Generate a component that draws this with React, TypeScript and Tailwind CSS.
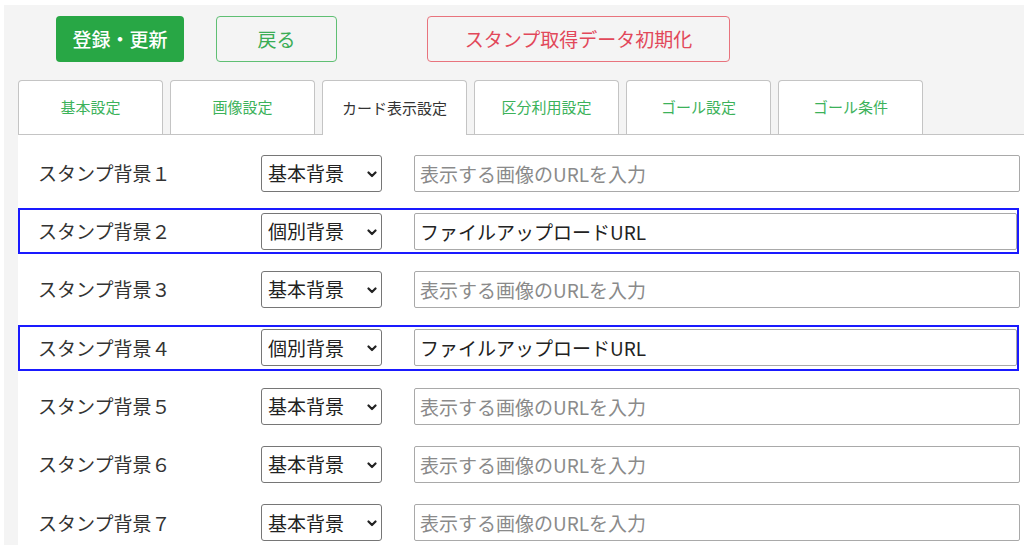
import React, { useState } from 'react';

const tabs = ['基本設定', '画像設定', 'カード表示設定', '区分利用設定', 'ゴール設定', 'ゴール条件'];

const rows = [
  { label: 'スタンプ背景１', mode: 'base' },
  { label: 'スタンプ背景２', mode: 'own' },
  { label: 'スタンプ背景３', mode: 'base' },
  { label: 'スタンプ背景４', mode: 'own' },
  { label: 'スタンプ背景５', mode: 'base' },
  { label: 'スタンプ背景６', mode: 'base' },
  { label: 'スタンプ背景７', mode: 'base' },
];

const font = { fontFamily: '"Noto Sans CJK JP", "Noto Sans", sans-serif' };

export default function App() {
  const [active, setActive] = useState(2);
  const [modes, setModes] = useState(rows.map((r) => r.mode));

  const changeMode = (i: number, value: string) => {
    setModes((prev) => prev.map((m, j) => (j === i ? value : m)));
  };

  return (
    <div className="bg-white pt-[5px] pl-[4px] h-[545px] overflow-hidden" style={font}>
      <div className="bg-[#f4f4f4] h-full">
        {/* action buttons */}
        <div className="flex pt-[11px] pl-[52px]">
          <button className="w-[128px] h-[46px] rounded-[4px] bg-[#28a745] text-white text-[19px] font-medium">
            登録・更新
          </button>
          <button className="ml-[32px] w-[121px] h-[46px] rounded-[4px] border border-[#5fbf73] bg-transparent text-[#3aad55] text-[19px]">
            戻る
          </button>
          <button className="ml-[90px] w-[303px] h-[46px] rounded-[4px] border border-[#e8737d] bg-transparent text-[#e2485a] text-[19px]">
            スタンプ取得データ初期化
          </button>
        </div>

        {/* tabs */}
        <div className="flex items-end gap-[7px] ml-[14px] mt-[18px] border-b border-[#c4c4c4]">
          {tabs.map((t, i) => (
            <button
              key={t}
              onClick={() => setActive(i)}
              className={
                i === active
                  ? 'w-[145px] h-[55px] -mb-px bg-white border border-b-0 border-[#c4c4c4] rounded-t-[4px] text-[15px] text-[#333333]'
                  : 'w-[145px] h-[54px] bg-white border border-b-0 border-[#c4c4c4] rounded-t-[4px] text-[15px] text-[#3cb25a]'
              }
            >
              {t}
            </button>
          ))}
        </div>

        {/* rows */}
        <div className="ml-[14px] bg-white pt-[15px] pb-6 flex flex-col gap-[12.33px]">
          {rows.map((r, i) => (
            <div
              key={r.label}
              className={
                modes[i] === 'own'
                  ? 'flex items-center h-[46px] mr-[5px] pl-[18px] border-2 border-[#1a1aff]'
                  : 'flex items-center h-[46px] mr-[5px] pl-[18px] border-2 border-transparent'
              }
            >
              <div className="w-[223px] text-[19px] text-[#333333]">{r.label}</div>
              <div className="relative w-[121px] h-[37px]">
                <select
                  value={modes[i]}
                  onChange={(e) => changeMode(i, e.target.value)}
                  className="appearance-none w-full h-full border border-[#767676] rounded-[3px] bg-white pl-[6px] text-[19px] text-[#222222] outline-none"
                  style={font}
                >
                  <option value="base">基本背景</option>
                  <option value="own">個別背景</option>
                </select>
                <svg
                  className="absolute right-[5px] top-[16px] pointer-events-none"
                  width="10"
                  height="7"
                  viewBox="0 0 10 7"
                  fill="none"
                  stroke="#222"
                  strokeWidth="2.2"
                  strokeLinecap="round"
                  strokeLinejoin="round"
                >
                  <path d="M1.5 1.5 L5 5 L8.5 1.5" />
                </svg>
              </div>
              <input
                className={
                  modes[i] === 'own'
                    ? 'ml-[32px] flex-1 h-[37px] border border-[#a9a9a9] rounded-[2px] pl-[5px] text-[19px] text-[#222222] placeholder:text-[#8a8a8a] outline-none'
                    : 'ml-[32px] -mr-[3px] flex-1 h-[37px] border border-[#a9a9a9] rounded-[2px] pl-[5px] text-[19px] text-[#222222] placeholder:text-[#8a8a8a] outline-none'
                }
                style={font}
                placeholder="表示する画像のURLを入力"
                defaultValue={modes[i] === 'own' ? 'ファイルアップロードURL' : ''}
              />
            </div>
          ))}
        </div>
      </div>
    </div>
  );
}
